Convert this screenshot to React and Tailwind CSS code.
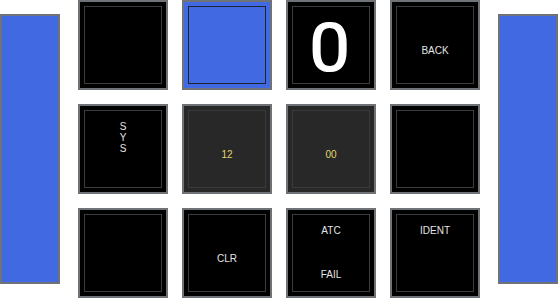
import React from 'react';

const font = { fontFamily: '"Liberation Sans", Arial, sans-serif' };

const Tile = ({ variant = 'black', children, className = '' }) => {
  const outer =
    variant === 'blue'
      ? 'bg-[#4169e1]'
      : variant === 'dark'
      ? 'bg-[#282828]'
      : 'bg-black';
  const inner =
    variant === 'blue'
      ? 'border-[#1f2330]'
      : variant === 'dark'
      ? 'border-[#383a3c]'
      : 'border-[#3c3c3e]';
  return (
    <div className={`w-[90px] h-[90px] border-2 border-[#6f7377] p-1 ${outer}`}>
      <div className={`w-full h-full border ${inner} flex flex-col items-center ${className}`}>
        {children}
      </div>
    </div>
  );
};

const Label = ({ children, yellow }) => (
  <span className={`text-[10px] leading-[12px] ${yellow ? 'text-[#e3d66c]' : 'text-[#e4e4e4]'}`}>
    {children}
  </span>
);

const SideBar = () => (
  <div className="w-[60px] h-[270px] bg-[#4169e1] border-2 border-[#6f7377]" />
);

export default function App() {
  return (
    <div className="w-[558px] h-[298px] bg-white flex items-center gap-[18px]" style={font}>
      <SideBar />
      <div className="grid grid-cols-4 gap-[14px]">
        <Tile />
        <Tile variant="blue" />
        <Tile className="justify-center">
          <span
            className="text-white text-[66px] leading-none font-normal translate-y-[4px] -translate-x-[1px] scale-x-[1.1] [-webkit-text-stroke:1.2px_white]"
            style={{ fontFamily: 'Roboto, "Liberation Sans", sans-serif' }}
          >
            0
          </span>
        </Tile>
        <Tile className="justify-center pt-3">
          <Label>BACK</Label>
        </Tile>

        <Tile className="pt-[10px]">
          <span className="flex flex-col items-center text-[10px] leading-[11px] text-[#e4e4e4]">
            <span>S</span>
            <span>Y</span>
            <span>S</span>
          </span>
        </Tile>
        <Tile variant="dark" className="justify-center pt-3">
          <Label yellow>12</Label>
        </Tile>
        <Tile variant="dark" className="justify-center pt-3">
          <Label yellow>00</Label>
        </Tile>
        <Tile />

        <Tile />
        <Tile className="justify-center pt-3">
          <Label>CLR</Label>
        </Tile>
        <Tile className="justify-between pt-[10px] pb-[10px]">
          <Label>ATC</Label>
          <Label>FAIL</Label>
        </Tile>
        <Tile className="pt-[10px]">
          <Label>IDENT</Label>
        </Tile>
      </div>
      <SideBar />
    </div>
  );
}
